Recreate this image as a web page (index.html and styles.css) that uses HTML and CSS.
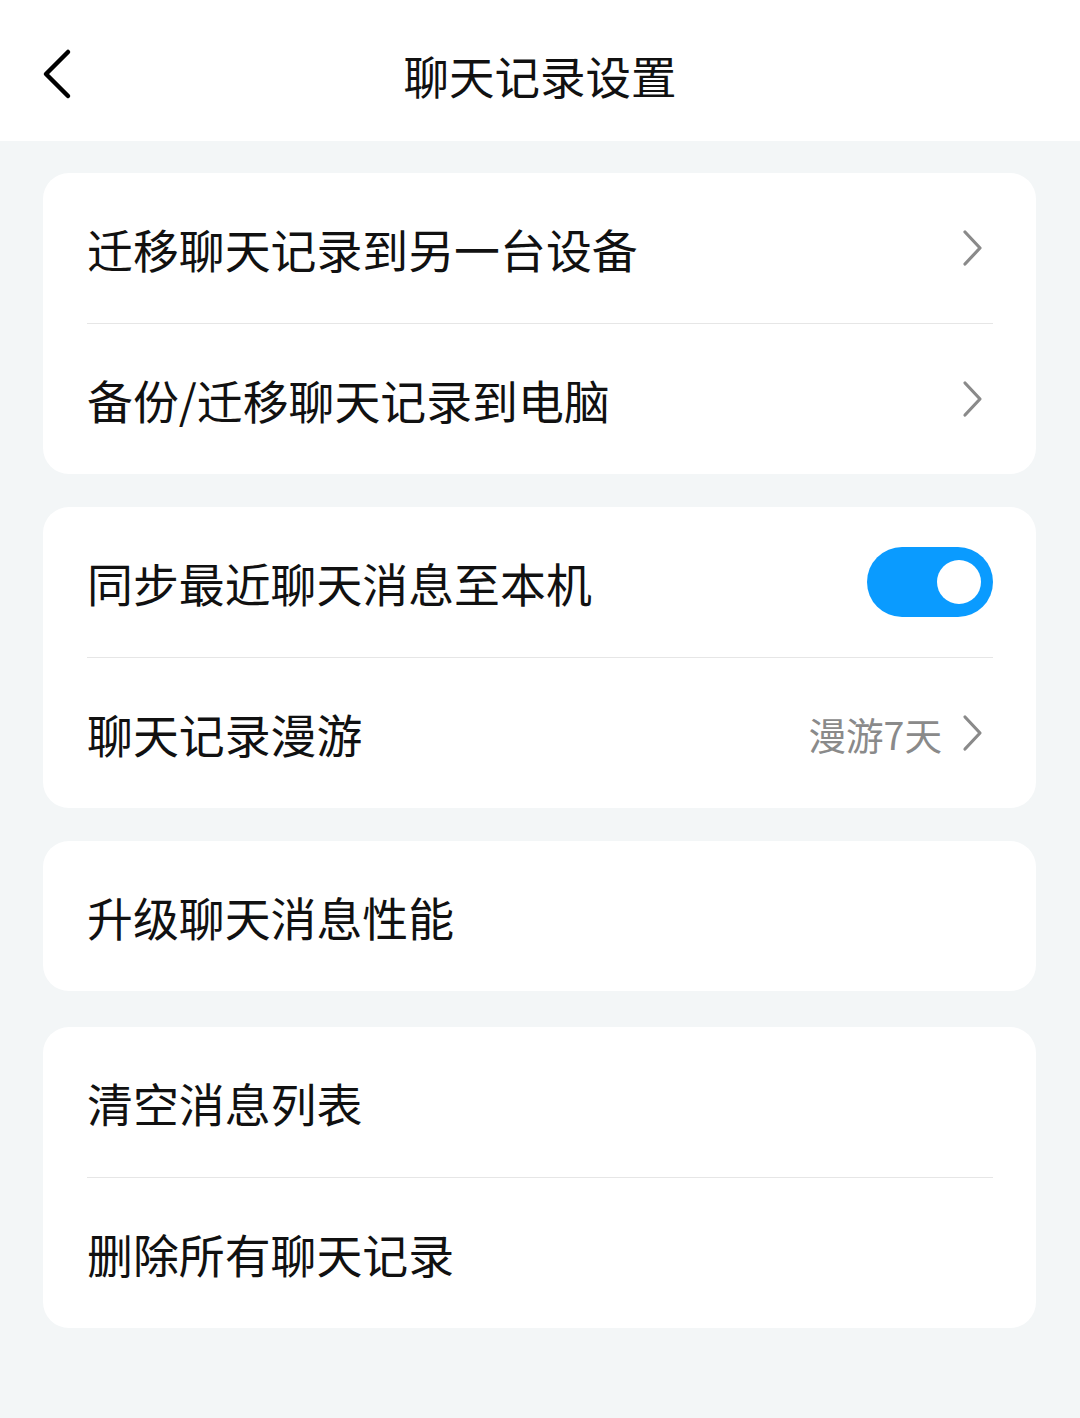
FILE: index.html
```html
<!DOCTYPE html>
<html>
<head>
    <meta charset="utf-8">
    <title>聊天记录设置</title>
    <link rel="stylesheet" href="styles.css">
</head>
<body>
    <div class="header">
        <svg class="back" width="40" height="56" viewBox="0 0 40 56">
            <path d="M29 6 L7 28 L29 50" fill="none" stroke="#000" stroke-width="4.5" stroke-linecap="round" stroke-linejoin="round"/>
        </svg>
        <h1>聊天记录设置</h1>
    </div>

    <div class="content">
        <div class="card">
            <div class="row">
                <span class="label">迁移聊天记录到另一台设备</span>
                <svg class="chev" width="24" height="40" viewBox="0 0 24 40"><path d="M5 4 L20 20 L5 36" fill="none" stroke="#8a8a8a" stroke-width="3.2" stroke-linecap="round" stroke-linejoin="round"/></svg>
            </div>
            <div class="row">
                <span class="label">备份/迁移聊天记录到电脑</span>
                <svg class="chev" width="24" height="40" viewBox="0 0 24 40"><path d="M5 4 L20 20 L5 36" fill="none" stroke="#8a8a8a" stroke-width="3.2" stroke-linecap="round" stroke-linejoin="round"/></svg>
            </div>
        </div>

        <div class="card">
            <div class="row">
                <span class="label">同步最近聊天消息至本机</span>
                <span class="toggle"><span class="knob"></span></span>
            </div>
            <div class="row">
                <span class="label">聊天记录漫游</span>
                <span class="value">漫游7天</span>
                <svg class="chev" width="24" height="40" viewBox="0 0 24 40"><path d="M5 4 L20 20 L5 36" fill="none" stroke="#8a8a8a" stroke-width="3.2" stroke-linecap="round" stroke-linejoin="round"/></svg>
            </div>
        </div>

        <div class="card">
            <div class="row">
                <span class="label">升级聊天消息性能</span>
            </div>
        </div>

        <div class="card last">
            <div class="row">
                <span class="label">清空消息列表</span>
            </div>
            <div class="row">
                <span class="label">删除所有聊天记录</span>
            </div>
        </div>
    </div>
</body>
</html>
```

FILE: styles.css
```css
body {
    margin: 0;
    background-color: #f3f6f7;
    font-family: "Noto Sans CJK SC", "Noto Sans", sans-serif;
    color: #111111;
}

.header {
    height: 141px;
    background-color: #ffffff;
    position: relative;
    display: flex;
    align-items: center;
    justify-content: center;
}

.back {
    position: absolute;
    left: 39px;
    top: 46px;
}

h1 {
    margin: 0;
    font-size: 45.5px;
    font-weight: 400;
    color: #111111;
    padding-top: 8px;
}

.content {
    padding: 32px 44px 0 43px;
}

.card {
    background-color: #ffffff;
    border-radius: 26px;
    padding: 0 43px 0 44px;
    margin-bottom: 33px;
}

.card.last {
    margin-top: 36px;
}

.row {
    height: 150px;
    display: flex;
    align-items: center;
    border-bottom: 1px solid #e6e6e6;
}

.row:last-child {
    border-bottom: none;
}

.label {
    flex: 1;
    font-size: 45.9px;
    line-height: 1;
    padding-top: 2px;
}

.value {
    font-size: 37.6px;
    color: #8a8a8a;
    margin-right: 18px;
}

.chev {
    margin-right: 9px;
}

.toggle {
    width: 126px;
    height: 70px;
    border-radius: 35px;
    background-color: #0a9bff;
    position: relative;
}

.knob {
    position: absolute;
    width: 44px;
    height: 44px;
    border-radius: 50%;
    background-color: #ffffff;
    right: 12px;
    top: 13px;
}
```
